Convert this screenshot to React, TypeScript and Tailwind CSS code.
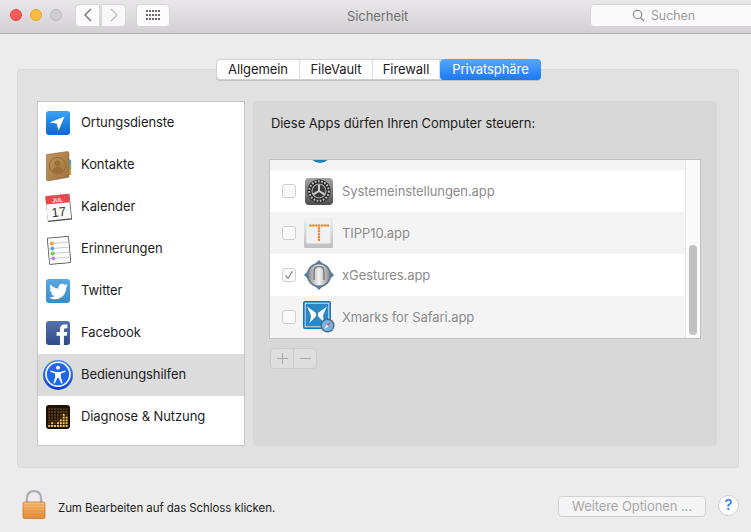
import React from "react";
import { FaTwitter } from "react-icons/fa";

const Svg = ({ children, w = 32, h = 32, box }: { children: React.ReactNode; w?: number; h?: number; box?: string }) => (
  <svg width={w} height={h} viewBox={box ?? `0 0 ${w} ${h}`} className="block shrink-0">
    {children}
  </svg>
);

const LocationIcon = () => (
  <Svg>
    <defs>
      <linearGradient id="loc" x1="0" y1="0" x2="0" y2="1">
        <stop offset="0" stopColor="#3aa2f6" />
        <stop offset="1" stopColor="#0d66d6" />
      </linearGradient>
    </defs>
    <rect x="4" y="4" width="24" height="24" rx="3" fill="url(#loc)" />
    <path d="M22.5 9.5 L7.8 15.6 L14.6 16.6 L16.6 23.5 Z" fill="#fff" />
  </Svg>
);

const ContactsIcon = () => (
  <Svg>
    <defs>
      <linearGradient id="book" x1="0" y1="0" x2="1" y2="1">
        <stop offset="0" stopColor="#c2945c" />
        <stop offset="1" stopColor="#a0723c" />
      </linearGradient>
    </defs>
    <path d="M26 10 l3.2 1 v5 h-3.2z" fill="#55a0d8" />
    <path d="M26 15 l3.2 1 v5 h-3.2z" fill="#7cb85a" />
    <path d="M26 20 l3.2 1 v5 h-3.2z" fill="#e2a13e" />
    <path d="M4.5 5.5 L25.5 2.5 Q27 2.5 27 4 L27 27.5 Q27 28.5 25.5 28.5 L6 32 Q4.5 32 4.5 30.5 Z" fill="url(#book)" stroke="#7d5a33" strokeWidth="0.5" />
    <circle cx="15.5" cy="16.5" r="8.2" fill="none" stroke="#8e6233" strokeWidth="0.9" />
    <circle cx="15.5" cy="14.5" r="3" fill="#9a6d3a" />
    <path d="M10 22 Q11 18 15.5 18 Q20 18 21 22 Q15.5 26 10 22z" fill="#9a6d3a" />
  </Svg>
);

const CalendarIcon = () => (
  <Svg>
    <g transform="rotate(-6 16 16)">
      <rect x="4.5" y="4" width="24.2" height="25.8" fill="#4c4c4c" />
      <rect x="4.5" y="4" width="23.5" height="24.5" fill="#fafafa" />
      <rect x="4.5" y="4" width="23.5" height="8.4" fill="#e5484d" />
      <text x="16.2" y="11" fontSize="5.5" fontWeight="700" fill="#fff" textAnchor="middle" fontFamily="'Liberation Sans', sans-serif">JUL</text>
      <text x="16.2" y="25.6" fontSize="13" fill="#333" textAnchor="middle" fontFamily="'Liberation Sans', sans-serif">17</text>
    </g>
  </Svg>
);

const RemindersIcon = () => (
  <Svg>
    <g transform="rotate(-5 16 17)">
      <rect x="6" y="4" width="22" height="27" rx="1" fill="#3c3c3c" />
      <rect x="6.7" y="4.7" width="20.6" height="25.6" fill="#fbfbfb" />
      <path d="M7 10h20M7 15h20M7 20h20M7 25h20" stroke="#bcbcbc" strokeWidth="0.7" />
      <circle cx="10.5" cy="10" r="2" fill="#f5a13d" />
      <circle cx="10.5" cy="15" r="2" fill="#4aa9ee" />
      <circle cx="10.5" cy="20" r="2" fill="#6cce4e" />
      <circle cx="10.5" cy="25" r="2" fill="#c77be0" />
    </g>
  </Svg>
);

const TwitterIcon = () => (
  <div className="flex h-6 w-6 items-center justify-center rounded-[3px] bg-gradient-to-b from-[#58a8e0] to-[#3a8cc8] text-[19px] text-white">
    <FaTwitter />
  </div>
);

const FacebookIcon = () => (
  <Svg>
    <defs>
      <linearGradient id="fb" x1="0" y1="0" x2="0" y2="1">
        <stop offset="0" stopColor="#5472ae" />
        <stop offset="1" stopColor="#2f4a87" />
      </linearGradient>
    </defs>
    <rect x="4" y="4" width="24" height="24" rx="3" fill="url(#fb)" />
    <path d="M18 28 V18.8 H14.6 V15 H18 V12.2 Q18 7.6 22.6 7.6 H25.4 V11.3 H23.4 Q21.9 11.3 21.9 12.8 V15 H25.3 L24.8 18.8 H21.9 V28 Z" fill="#fff" />
  </Svg>
);

const AccessIcon = () => (
  <Svg>
    <defs>
      <linearGradient id="ac" x1="0" y1="0" x2="0" y2="1">
        <stop offset="0" stopColor="#4a8cf5" />
        <stop offset="1" stopColor="#0b3fd0" />
      </linearGradient>
    </defs>
    <circle cx="16" cy="16" r="15" fill="url(#ac)" />
    <circle cx="16" cy="15.3" r="12" fill="#1f66ea" stroke="#fff" strokeWidth="1.6" />
    <circle cx="16" cy="8.7" r="1.9" fill="#fff" />
    <path d="M8.6 11.6 L13.6 13 H18.4 L23.4 11.6 L23.8 12.8 L19 14.6 L18.8 18 L20.6 24.2 L19.2 24.6 L16.6 18.8 H15.4 L12.8 24.6 L11.4 24.2 L13.2 18 L13 14.6 L8.2 12.8 Z" fill="#fff" />
  </Svg>
);

const DiagnoseIcon = () => {
  const heights = [1, 2, 1, 2, 3, 5, 4];
  return (
    <Svg>
      <rect x="4" y="4" width="24" height="24" rx="3" fill="#1b1108" />
      {heights.map((h, c) =>
        Array.from({ length: 7 }).map((_, r) => (
          <rect
            key={`${c}-${r}`}
            x={6.2 + c * 2.9}
            y={7.2 + r * 2.8}
            width="2"
            height="2"
            fill={6 - r < h ? "#fcc64c" : "#5a3d16"}
          />
        ))
      )}
    </Svg>
  );
};

const GearIcon = () => (
  <Svg w={32} h={30}>
    <defs>
      <linearGradient id="sys" x1="0" y1="0" x2="0" y2="1">
        <stop offset="0" stopColor="#a4a4a4" />
        <stop offset="1" stopColor="#4e4e4e" />
      </linearGradient>
    </defs>
    <rect x="2" y="2" width="28" height="27" rx="4" fill="url(#sys)" />
    <circle cx="16" cy="15" r="11.5" fill="#262626" />
    <circle cx="16" cy="15" r="9.8" fill="none" stroke="#c2c2c2" strokeWidth="2" strokeDasharray="1.8 1.4" />
    <circle cx="16" cy="15" r="7" fill="#3a3a3a" stroke="#b0b0b0" strokeWidth="1.2" />
    <path d="M16 15 L16 8.4 M16 15 L10.3 18.4 M16 15 L21.7 18.4" stroke="#cfcfcf" strokeWidth="2" />
  </Svg>
);

const TippIcon = () => (
  <Svg w={32} h={30}>
    <defs>
      <linearGradient id="key" x1="0" y1="0" x2="0" y2="1">
        <stop offset="0" stopColor="#eeeeee" />
        <stop offset="1" stopColor="#bfbfbf" />
      </linearGradient>
    </defs>
    <rect x="1" y="0" width="29" height="30" rx="1.5" fill="url(#key)" />
    <rect x="3.5" y="1.5" width="24" height="24" rx="1" fill="#f1f1f1" />
    <path d="M7.5 7.5 H25" stroke="#f6851f" strokeWidth="2.6" strokeLinecap="round" strokeDasharray="0.01 2.9" />
    <path d="M16 10.4 V23" stroke="#f6851f" strokeWidth="2.6" strokeLinecap="round" strokeDasharray="0.01 2.9" />
  </Svg>
);

const XGesturesIcon = () => (
  <Svg w={32} h={30}>
    <defs>
      <linearGradient id="xg" x1="0" y1="0" x2="1" y2="0">
        <stop offset="0" stopColor="#8f8f8f" />
        <stop offset="0.5" stopColor="#f4f4f4" />
        <stop offset="1" stopColor="#8f8f8f" />
      </linearGradient>
    </defs>
    <path d="M16 0 L31 15 L16 30 L1 15 Z" fill="#4f78bb" />
    <circle cx="16" cy="15" r="12.2" fill="#66788e" />
    <circle cx="16" cy="15" r="10.6" fill="url(#xg)" />
    <path d="M11 20 V12 Q11 6.5 16 6.5 Q21 6.5 21 12 V20" fill="none" stroke="#7a7a7a" strokeWidth="1.4" />
  </Svg>
);

const XmarksIcon = () => (
  <Svg w={32} h={32}>
    <rect x="0.5" y="0.5" width="27" height="27" rx="1" fill="#2a86c4" stroke="#1f73ad" />
    <rect x="2.2" y="2.2" width="23.6" height="23.6" fill="#2a86c4" stroke="#e9f2f8" strokeWidth="0.8" />
    <path d="M4 5.5 L12.8 11.8 Q13.6 14 12.8 15.6 L6 22.5 Q9 16.5 7.2 12.5 Z" fill="#fff" />
    <path d="M24 5.5 L15.2 11.8 Q14.4 14 15.2 15.6 L22 22.5 Q19 16.5 20.8 12.5 Z" fill="#f3f8fb" />
    <circle cx="24.5" cy="24.5" r="7" fill="#4a6b88" />
    <circle cx="24.5" cy="24.5" r="5.6" fill="#74b4e4" />
    <path d="M27.5 21 L25.4 25.4 L23.6 23.6 Z" fill="#e2564f" />
    <path d="M21.5 28 L23.6 23.6 L25.4 25.4 Z" fill="#f2f2f2" />
  </Svg>
);

const Lock = () => (
  <Svg w={24} h={29}>
    <defs>
      <linearGradient id="lk" x1="0" y1="0" x2="0" y2="1">
        <stop offset="0" stopColor="#f9c17a" />
        <stop offset="1" stopColor="#e58a35" />
      </linearGradient>
    </defs>
    <path d="M5 12 V9 Q5 1.2 12 1.2 Q19 1.2 19 9 V12" fill="none" stroke="#a9adb2" strokeWidth="2.4" />
    <path d="M6.4 12 V9 Q6.4 2.6 12 2.6 Q17.6 2.6 17.6 9 V12" fill="none" stroke="#eceff2" strokeWidth="0.8" />
    <rect x="1" y="12" width="22" height="16.5" rx="1.5" fill="url(#lk)" stroke="#b66e2c" strokeWidth="0.7" />
    <path d="M1.5 15h21M1.5 18h21M1.5 21h21M1.5 24h21" stroke="#d9842f" strokeWidth="0.7" opacity="0.6" />
  </Svg>
);

const sidebar: [string, React.ReactNode][] = [
  ["Ortungsdienste", <LocationIcon />],
  ["Kontakte", <ContactsIcon />],
  ["Kalender", <CalendarIcon />],
  ["Erinnerungen", <RemindersIcon />],
  ["Twitter", <TwitterIcon />],
  ["Facebook", <FacebookIcon />],
  ["Bedienungshilfen", <AccessIcon />],
  ["Diagnose & Nutzung", <DiagnoseIcon />],
];

const apps: [string, React.ReactNode, boolean, boolean][] = [
  ["Systemeinstellungen.app", <GearIcon />, false, false],
  ["TIPP10.app", <TippIcon />, false, true],
  ["xGestures.app", <XGesturesIcon />, true, false],
  ["Xmarks for Safari.app", <XmarksIcon />, false, true],
];

const tabs = [
  ["Allgemein", "w-[83px]"],
  ["FileVault", "w-[73px]"],
  ["Firewall", "w-[67px]"],
];

export default function App() {
  return (
    <div className="flex h-[532px] w-[751px] flex-col overflow-hidden bg-[#ececec] font-['Inter','Liberation_Sans',sans-serif] text-[13px] tracking-[-0.08px] text-[#1c1c1c]">
      <header className="flex h-[34px] shrink-0 items-center border-b border-[#b1b1b1] bg-gradient-to-b from-[#e9e7e9] to-[#d2d0d2] pb-[3px] pl-[10px]">
        <span className="h-3 w-3 shrink-0 rounded-full border border-[#e5484a] bg-[#fc5b57]" />
        <span className="ml-2 h-3 w-3 shrink-0 rounded-full border border-[#e3a52f] bg-[#fdbc40]" />
        <span className="ml-2 h-3 w-3 shrink-0 rounded-full border border-[#bcbcbc] bg-[#cfcdcf]" />
        <div className="ml-[13px] flex h-[23px] w-[25px] shrink-0 items-center justify-center rounded-l-[4px] border border-[#d6d6d6] bg-[#fbfbfb]">
          <svg width="10" height="14" viewBox="0 0 10 14"><path d="M8 1 L2 7 L8 13" fill="none" stroke="#6e6e6e" strokeWidth="1.3" /></svg>
        </div>
        <div className="ml-px flex h-[23px] w-[25px] shrink-0 items-center justify-center rounded-r-[4px] border border-[#d6d6d6] bg-[#f8f8f8]">
          <svg width="10" height="14" viewBox="0 0 10 14"><path d="M2 1 L8 7 L2 13" fill="none" stroke="#bfbfbf" strokeWidth="1.3" /></svg>
        </div>
        <div className="ml-[10px] flex h-[23px] w-[34px] shrink-0 items-center justify-center rounded-[4px] border border-[#d6d6d6] bg-[#fbfbfb]">
          <svg width="15" height="11" viewBox="0 0 15 11" fill="#6a6a6a">
            {[0, 4, 8].map((y) => [0, 3, 6, 9, 12].map((x) => <rect key={`${x}-${y}`} x={x} y={y} width="2" height="2" />))}
          </svg>
        </div>
        <span className="ml-[177px] w-[60px] shrink-0 whitespace-nowrap pt-[3px] text-center text-[#6f6f6f]">Sicherheit</span>
        <div className="ml-[183px] flex h-[23px] w-[165px] shrink-0 items-center justify-center gap-[6px] rounded-[4px] border border-[#d4d4d4] bg-[#f9f9f9] pr-[18px] text-[12.5px] text-[#a0a0a0]">
          <svg width="13" height="13" viewBox="0 0 13 13" fill="none" stroke="#7d7d7d" strokeWidth="1.1"><circle cx="5.5" cy="5.5" r="4.2" /><path d="M8.6 8.6 L12 12" /></svg>
          <span className="pt-[2px]">Suchen</span>
        </div>
      </header>

      <main className="ml-[17px] mt-[35px] h-[399px] w-[722px] shrink-0 rounded-[3px] border border-[#dadada] bg-[#e1e1e1]">
        <div className="relative z-10 -mt-[11px] ml-[198px] flex h-[21px] w-[325px] rounded-[4px] border border-[#d0d0d0] bg-white shadow-[0_1px_0_#c4c4c4]">
          {tabs.map(([t, w]) => (
            <div key={t} className={`flex ${w} items-center justify-center border-r border-[#dcdcdc]`}>{t}</div>
          ))}
          <div className="-my-px -mr-px flex flex-1 items-center justify-center rounded-[4px] bg-gradient-to-b from-[#56a6fc] to-[#1a78f6] text-white">
            Privatsphäre
          </div>
        </div>

        <div className="mt-[21px] flex gap-2 pl-[19px]">
          <aside className="h-[345px] w-[208px] shrink-0 border border-[#c5c5c5] bg-white">
            {sidebar.map(([label, icon], i) => (
              <div key={label} className={`flex h-[42px] items-center pl-1 ${i === 6 ? "bg-[#dcdcdc]" : ""}`}>
                <div className="flex w-[32px] items-center justify-center">{icon}</div>
                <span className="ml-[7px]">{label}</span>
              </div>
            ))}
          </aside>

          <section className="h-[345px] w-[464px] shrink-0 rounded-[3px] bg-[#d8d8d8] pl-4 pt-[12px]">
            <p className="pl-[2px] leading-[20px]">Diese Apps dürfen Ihren Computer steuern:</p>
            <div className="mt-[26px] flex h-[180px] w-[432px] border border-[#c0c0c0] bg-white">
              <div className="w-[415px] shrink-0">
                <div className="flex h-[10px] overflow-hidden bg-[#f4f4f4] pl-[39px]">
                  <svg width="22" height="10" viewBox="0 0 22 10" className="block"><circle cx="11" cy="-8" r="11" fill="#1d7fb4" /></svg>
                </div>
                {apps.map(([name, icon, checked, striped]) => (
                  <div key={name} className={`flex h-[42px] items-center pl-[12px] ${striped ? "bg-[#f4f4f4]" : "bg-white"}`}>
                    <span className="flex h-[14px] w-[14px] shrink-0 items-center justify-center rounded-[3px] border border-[#cfcfcf] bg-[#f9f9f9]">
                      {checked && (
                        <svg width="10" height="10" viewBox="0 0 10 10" fill="none" stroke="#8a8a8a" strokeWidth="1.2"><path d="M1.5 5.5 L4 8.2 L8.5 1.2" /></svg>
                      )}
                    </span>
                    <div className="ml-[7px] flex w-[32px] shrink-0 items-center">{icon}</div>
                    <span className="ml-[7px] pt-[2px] text-[#8c8c8c]">{name}</span>
                  </div>
                ))}
              </div>
              <div className="flex flex-1 flex-col items-center border-l border-[#e6e6e6] bg-[#fafafa] pt-[85px]">
                <div className="h-[90px] w-2 rounded-full bg-[#c1c1c1]" />
              </div>
            </div>
            <div className="ml-px mt-[9px] flex h-[21px] w-[47px] rounded-[4px] border border-[#cdcdcd] bg-[#dedede]">
              <div className="flex w-[23px] items-center justify-center border-r border-[#cdcdcd]">
                <svg width="11" height="11" viewBox="0 0 11 11" stroke="#a8a8a8"><path d="M5.5 0 V11 M0 5.5 H11" /></svg>
              </div>
              <div className="flex flex-1 items-center justify-center">
                <svg width="11" height="11" viewBox="0 0 11 11" stroke="#a8a8a8"><path d="M0 5.5 H11" /></svg>
              </div>
            </div>
          </section>
        </div>
      </main>

      <footer className="mt-[22px] flex items-start pl-[22px] pr-[12px]">
        <Lock />
        <span className="ml-[12px] mt-[10px] whitespace-nowrap text-[11.5px] leading-[16px]">Zum Bearbeiten auf das Schloss klicken.</span>
        <div className="ml-auto mt-[6px] flex h-[21px] w-[148px] shrink-0 items-center justify-center rounded-[4px] border border-[#d2d2d2] bg-[#f5f5f5] text-[#a9a9a9]">
          Weitere Optionen ...
        </div>
        <div className="ml-[12px] mt-[5px] flex h-[21px] w-[21px] shrink-0 items-center justify-center rounded-full border border-[#cccccc] bg-white text-[15px] font-medium text-[#2a7bf0]">
          ?
        </div>
      </footer>
    </div>
  );
}
